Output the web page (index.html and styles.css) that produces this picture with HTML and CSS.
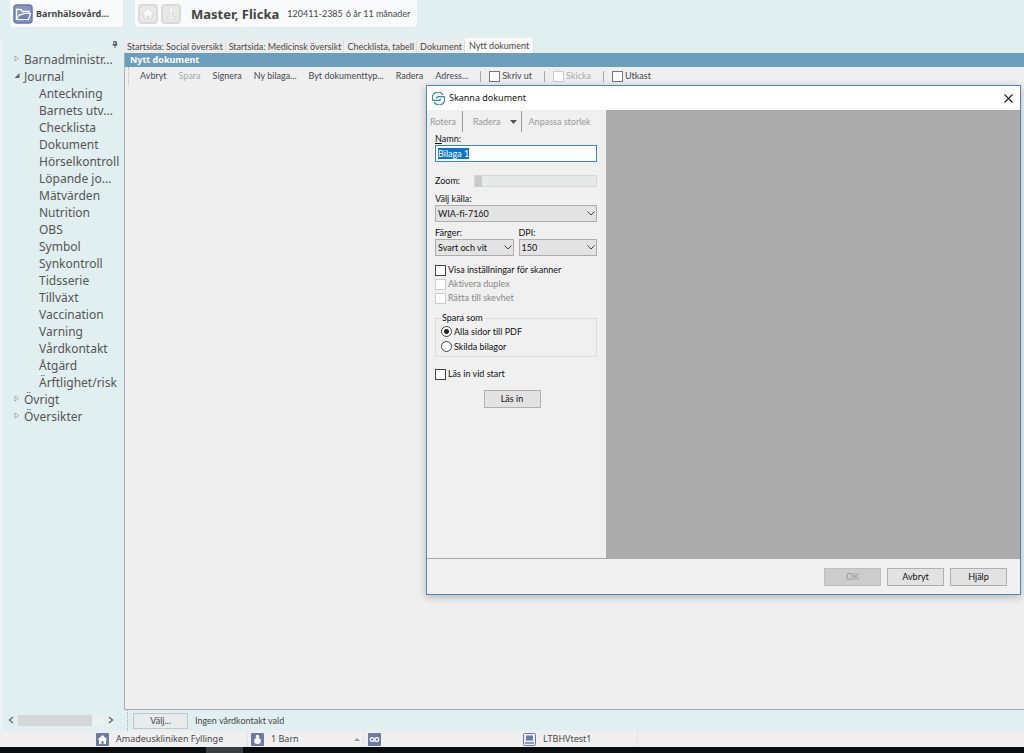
FILE: index.html
```html
<!DOCTYPE html>
<html lang="sv">
<head>
<meta charset="utf-8">
<title>Nytt dokument</title>
<link rel="stylesheet" href="styles.css">
</head>
<body>
<div class="app">
  <header class="top">
    <button class="card unit">
      <svg width="20" height="20" viewBox="0 0 20 20"><rect x="1" y="1" width="18" height="18" rx="3" fill="#8495c4" stroke="#6478ae" stroke-width="1.5"/><path d="M3.500 15V5.500h4.500l1.500 2h6.500v2" fill="none" stroke="#fff" stroke-width="1.300"/><path d="M3.500 15.500L6 11c3 0 4-1.500 6-1.500h5.500l-2 6z" fill="#7184b6" stroke="#fff" stroke-width="1.200"/></svg>
      <span>Barnhälsovård...</span>
    </button>
    <div class="card patient">
      <button class="ghost" disabled aria-label="Hem"><svg width="20" height="20" viewBox="0 0 20 20"><rect x="1" y="1" width="18" height="18" rx="3" fill="#e8e8e8" stroke="#dadada" stroke-width="2"/><path d="M10 4.500L4 10h2v5h3v-3h2v3h3v-5h2z" fill="#f8f8f8" stroke="#cfcfcf" stroke-width=".6"/></svg></button>
      <button class="ghost" disabled aria-label="Patient"><svg width="20" height="20" viewBox="0 0 20 20"><rect x="1" y="1" width="18" height="18" rx="3" fill="#e8e8e8" stroke="#dadada" stroke-width="2"/><path d="M10 4a2 2 0 0 1 1.500 3.500L11 9v4h3v2H6v-2h3V9l-.5-1.500A2 2 0 0 1 10 4z" fill="#f8f8f8" stroke="#cfcfcf" stroke-width=".6"/></svg></button>
      <h1>Master, Flicka</h1>
      <span class="pid">120411-2385</span>
      <span>6 år 11 månader</span>
    </div>
  </header>

  <div class="middle">
    <aside class="side">
      <button class="pin" aria-label="Fäst"><svg width="6" height="7" viewBox="0 0 7 8"><path d="M2 .5h3v4H2zM.5 4.500h6M3.500 4.500V8M4.500 1v3" fill="none" stroke="#444"/></svg></button>
      <nav class="tree">
        <a href="#" class="root"><svg width="6" height="8" viewBox="0 0 6 8"><path d="M1 0l3.500 2.500L1 5z" fill="#fff" stroke="#8a9494" stroke-width=".8"/></svg>Barnadministr...</a>
        <a href="#" class="root"><svg width="6" height="8" viewBox="0 0 6 8"><path d="M5.500 0v5H.5z" fill="#666"/></svg>Journal</a>
        <a href="#">Anteckning</a>
        <a href="#">Barnets utv...</a>
        <a href="#">Checklista</a>
        <a href="#">Dokument</a>
        <a href="#">Hörselkontroll</a>
        <a href="#">Löpande jo...</a>
        <a href="#">Mätvärden</a>
        <a href="#">Nutrition</a>
        <a href="#">OBS</a>
        <a href="#">Symbol</a>
        <a href="#">Synkontroll</a>
        <a href="#">Tidsserie</a>
        <a href="#">Tillväxt</a>
        <a href="#">Vaccination</a>
        <a href="#">Varning</a>
        <a href="#">Vårdkontakt</a>
        <a href="#">Åtgärd</a>
        <a href="#">Ärftlighet/risk</a>
        <a href="#" class="root"><svg width="6" height="8" viewBox="0 0 6 8"><path d="M1 0l3.500 2.500L1 5z" fill="#fff" stroke="#8a9494" stroke-width=".8"/></svg>Övrigt</a>
        <a href="#" class="root"><svg width="6" height="8" viewBox="0 0 6 8"><path d="M1 0l3.500 2.500L1 5z" fill="#fff" stroke="#8a9494" stroke-width=".8"/></svg>Översikter</a>
      </nav>
      <div class="scroll">
        <button aria-label="Vänster"><svg width="6" height="8" viewBox="0 0 6 8"><path d="M5 1L1.500 4 5 7" fill="none" stroke="#666" stroke-width="1.300"/></svg></button>
        <div class="track"><div class="thumb"></div></div>
        <button aria-label="Höger"><svg width="6" height="8" viewBox="0 0 6 8"><path d="M1 1l3.500 3L1 7" fill="none" stroke="#666" stroke-width="1.300"/></svg></button>
      </div>
    </aside>

    <main class="main">
      <div class="tabs">
        <button>Startsida: Social översikt</button>
        <button>Startsida: Medicinsk översikt</button>
        <button>Checklista, tabell</button>
        <button>Dokument</button>
        <button class="active">Nytt dokument</button>
      </div>
      <section class="doc">
        <h2>Nytt dokument</h2>
        <div class="toolbar">
          <button>Avbryt</button>
          <button disabled>Spara</button>
          <button>Signera</button>
          <button>Ny bilaga...</button>
          <button>Byt dokumenttyp...</button>
          <button>Radera</button>
          <button>Adress...</button>
          <label class="tick"><input type="checkbox">Skriv ut</label>
          <label class="tick off"><input type="checkbox" disabled>Skicka</label>
          <label class="tick last"><input type="checkbox">Utkast</label>
        </div>
      </section>
      <div class="contact">
        <button class="btn">Välj...</button>
        <span>Ingen vårdkontakt vald</span>
      </div>
    </main>
  </div>

  <footer class="status">
    <div class="cell clinic"><svg width="13" height="13" viewBox="0 0 13 13"><rect width="13" height="13" rx="1" fill="#6d7ba3"/><path d="M6.500 2L1.500 6.500H3V11h2.500V8h2v3H10V6.500h1.500z" fill="#fff"/></svg>Amadeuskliniken Fyllinge</div>
    <div class="cell child"><svg width="13" height="13" viewBox="0 0 13 13"><rect width="13" height="13" rx="1" fill="#6d7ba3"/><circle cx="6.500" cy="3.500" r="1.800" fill="#fff"/><ellipse cx="6.500" cy="8" rx="3.500" ry="3" fill="#fff"/></svg>1 Barn<svg class="up" width="6" height="4" viewBox="0 0 6 4"><path d="M0 4l3-3 3 3z" fill="#999"/></svg></div>
    <div class="cell link"><svg width="13" height="13" viewBox="0 0 13 13"><rect width="13" height="13" rx="1" fill="#6d7ba3"/><circle cx="4.200" cy="6.500" r="1.900" fill="none" stroke="#fff" stroke-width="1.300"/><circle cx="8.800" cy="6.500" r="1.900" fill="none" stroke="#fff" stroke-width="1.300"/></svg></div>
    <div class="cell host"><svg width="13" height="13" viewBox="0 0 13 13"><rect x=".5" y=".5" width="12" height="12" rx="1" fill="#e9edf7" stroke="#6d7ba3"/><rect x="3" y="2.500" width="7" height="5" fill="#6d7ba3"/><path d="M2 10h9" stroke="#6d7ba3" stroke-width="1.500"/></svg>LTBHVtest1</div>
  </footer>
  <div class="taskbar"><i></i></div>
</div>

<div class="dialog" role="dialog" aria-labelledby="dlg-title">
  <div class="dlg-head">
    <svg width="13" height="13" viewBox="0 0 13 13"><path d="M10.800 2.900A5.600 5.600 0 0 0 1 8.400h5.500a2 2 0 0 0 2-2M2.200 10.100A5.600 5.600 0 0 0 12 4.600H6.500a2 2 0 0 0-2 2" fill="none" stroke="#2d8fa0" stroke-width="1.300"/></svg>
    <span id="dlg-title">Skanna dokument</span>
    <button aria-label="Stäng"><svg width="9" height="9" viewBox="0 0 9 9"><path d="M.5.5l8 8M8.500.5l-8 8" stroke="#222" stroke-width="1.100"/></svg></button>
  </div>
  <div class="dlg-body">
    <div class="panel">
      <div class="tools">
        <button disabled>Rotera</button>
        <button disabled class="split">Radera<svg width="7" height="4" viewBox="0 0 7 4"><path d="M0 0h7L3.500 4z" fill="#555"/></svg></button>
        <button disabled>Anpassa storlek</button>
      </div>
      <form class="form">
        <label for="name"><span><u>N</u>amn:</span></label>
        <input id="name" class="text" type="text" value="Bilaga 1">
        <div class="zoom"><label for="zoom">Zoom:</label><input id="zoom" type="range" value="0" disabled></div>
        <label for="source">Välj källa:</label>
        <div class="pick"><select id="source"><option>WIA-fi-7160</option></select><svg width="8" height="5" viewBox="0 0 8 5"><path d="M.5.5L4 4 7.500.5" fill="none" stroke="#444"/></svg></div>
        <div class="pair">
          <div><label for="color">Färger:</label><div class="pick"><select id="color"><option>Svart och vit</option></select><svg width="8" height="5" viewBox="0 0 8 5"><path d="M.5.5L4 4 7.500.5" fill="none" stroke="#444"/></svg></div></div>
          <div><label for="dpi">DPI:</label><div class="pick"><select id="dpi"><option>150</option></select><svg width="8" height="5" viewBox="0 0 8 5"><path d="M.5.5L4 4 7.500.5" fill="none" stroke="#444"/></svg></div></div>
        </div>
        <div class="checks">
          <label><input type="checkbox">Visa inställningar för skanner</label>
          <label class="off"><input type="checkbox" disabled>Aktivera duplex</label>
          <label class="off"><input type="checkbox" disabled>Rätta till skevhet</label>
        </div>
        <fieldset>
          <legend>Spara som</legend>
          <label><input type="radio" name="save" checked>Alla sidor till PDF</label>
          <label><input type="radio" name="save">Skilda bilagor</label>
        </fieldset>
        <label><input type="checkbox">Läs in vid start</label>
        <button type="button" class="btn read">Läs in</button>
      </form>
    </div>
    <div class="preview"></div>
  </div>
  <div class="dlg-foot">
    <button class="btn" disabled>OK</button>
    <button class="btn">Avbryt</button>
    <button class="btn">Hjälp</button>
  </div>
</div>
<script src="app.js"></script>
</body>
</html>
```
FILE: app.js
```js
const nameField = document.getElementById("name");
nameField.focus();
nameField.select();
```
FILE: styles.css
```css
* { box-sizing: border-box; }
body {
  margin: 0;
  font: 9px/14px Lato, "Noto Sans", sans-serif;
  font-variant-ligatures: none;
  color: #484848;
}
button, input, select { font: inherit; color: inherit; }
button { border: 0; padding: 0; background: none; white-space: nowrap; }
label, span, a, h1 { white-space: nowrap; }
svg { flex: none; }
.app { display: flex; flex-direction: column; min-height: 100vh; background: #e1eff0; }

.top { display: flex; gap: 12px; padding-left: 10px; height: 38px; align-items: flex-start; }
.card { display: flex; align-items: center; height: 27px; background: #f9fafb; border-radius: 0 0 4px 4px; }
.unit { width: 113px; gap: 3px; padding-left: 3px; font-family: "Noto Sans", sans-serif; font-weight: bold; color: #444; }
.patient { gap: 3px; padding: 0 7px 0 3px; }
.ghost { display: flex; }
.patient h1 { margin: 0 5px 0 7px; font-family: "Noto Sans", sans-serif; font-size: 13px; line-height: 18px; color: #444; }

.middle { flex: 1; display: flex; }
.side { width: 124px; flex: none; display: flex; flex-direction: column; border-left: 2px solid #edf3f4; }
.pin { align-self: flex-end; height: 12px; margin-right: 6px; line-height: 0; }
.tree { flex: 1; display: flex; flex-direction: column; padding-top: 1px; font-family: "Noto Sans", sans-serif; }
.tree a { font-size: 12px; line-height: 17px; color: #555; text-decoration: none; padding-left: 37px; }
.tree .root { display: flex; align-items: center; gap: 4px; padding-left: 12px; }
.scroll { display: flex; align-items: center; height: 22px; padding: 0 10px 0 6px; gap: 4px; }
.track { flex: 1; background: #edf0f0; }
.scroll button { display: flex; }
.thumb { height: 11px; width: 86%; background: #d5d6d7; }

.main { flex: 1; min-width: 0; display: flex; flex-direction: column; }
.tabs { display: flex; align-items: flex-end; height: 15px; }
.tabs button { height: 13px; padding: 0 2px 0 3px; background: #ececed; border-right: 1px solid #dcdfe0; }
.tabs .active { height: 15px; padding: 0 4px; background: #fafafa; }
.doc { flex: 1; background: #efeff0; border: 1px solid #a5b0b5; border-width: 0 0 1px 1px; }
.doc h2 { margin: 0; padding-left: 5px; font-family: "Noto Sans", sans-serif; font-size: 9px; line-height: 14px; color: #fff; background: #6c9ebc; }
.toolbar { display: flex; align-items: center; gap: 12px; height: 18px; margin-left: 3px; padding-left: 11px; border-left: 1px dotted #bbb; }
.toolbar button:disabled, .off { color: #aaa; }
.tick { height: 11px; padding-left: 8px; border-left: 1px solid #aaa; }
label { display: flex; align-items: center; gap: 2px; }
.contact { display: flex; align-items: center; gap: 7px; height: 21px; margin-left: 3px; padding-left: 5px; border-left: 1px dotted #aaa; }
.btn { width: 57px; height: 18px; background: #e2e2e2; border: 1px solid #b0b0b0; }
.contact .btn { width: 55px; height: 16px; background: #e7ebec; border-color: #c4c8c9; }

.status { display: flex; height: 16px; background: #efefef; padding-left: 96px; font-family: "Noto Sans", sans-serif; }
.cell { display: flex; align-items: center; gap: 7px; border-right: 1px solid #e3e3e3; }
.clinic { width: 152px; }
.child { width: 116px; padding-left: 3px; }
.child .up { margin-left: auto; margin-right: 3px; }
.link { width: 156px; padding-left: 4px; border: 0; }
.host { width: 118px; padding-left: 3px; }
.taskbar { height: 6px; background: #0b0c10; padding-left: 206px; }
.taskbar i { display: block; width: 37px; height: 6px; background: #3b3c3f; }

input[type="checkbox"], input[type="radio"] {
  appearance: none; width: 11px; height: 11px; margin: 0; flex: none;
  background: #fff; border: 1px solid #444;
}
.tick input[type="checkbox"] { border-color: #777; }
input[type="checkbox"]:disabled, .tick input[type="checkbox"]:disabled { border-color: #ccc; }
input[type="radio"] { border-radius: 50%; }
input[type="radio"]:checked { background: radial-gradient(circle, #222 0 2px, #fff 3px); }

.dialog {
  position: absolute; top: 85px; right: 3px; width: 595px; height: 510px;
  display: flex; flex-direction: column; color: #111;
  background: #f0f0f0; border: 1px solid #4d8ab9;
  box-shadow: 0 2px 8px rgba(0, 0, 0, .25);
}
.dlg-head { display: flex; align-items: center; gap: 4px; height: 24px; padding: 0 7px 0 5px; background: #fff; font-family: "Noto Sans", sans-serif; }
.dlg-head button { margin-left: auto; display: flex; }
.dlg-body { flex: 1; display: flex; border-bottom: 1px solid #aaa; }
.panel { width: 179px; }
.preview { flex: 1; background: #ababab; }
.tools { display: flex; align-items: center; height: 23px; color: #999; }
.tools button { height: 21px; padding: 0 7px; border-left: 1px solid #999; }
.tools button:first-child { padding: 0 6px 0 3px; border: 0; }
.tools .split { display: flex; align-items: center; gap: 9px; padding: 0 4px 0 10px; }
.form { display: flex; flex-direction: column; padding: 0 9px 0 8px; line-height: 12px; }
.text { height: 17px; padding: 0 2px; background: #fff; border: 1px solid #3a87c8; outline: 0; }
.text::selection { background: #0a74d1; color: #fff; }
.zoom { display: flex; align-items: center; justify-content: space-between; margin: 13px 0 6px; }
.zoom input { appearance: none; width: 123px; height: 12px; margin: 0; background: #e7e8e8; border: 1px solid #d6d7d7; }
.zoom input::-webkit-slider-thumb { appearance: none; width: 7px; height: 11px; background: #cacaca; }
.pick { position: relative; display: flex; }
.pick select { appearance: none; flex: 1; min-width: 0; height: 17px; padding: 0 2px; background: #e3e3e3; border: 1px solid #adadad; border-radius: 0; }
.pick svg { position: absolute; right: 2px; top: 6px; pointer-events: none; }
.pair { display: grid; grid-template-columns: 1fr 1fr; gap: 5px; margin-top: 5px; }
.checks { margin-top: 7px; line-height: 14px; }
.dialog .off { color: #888; }
fieldset { margin: 7px 0 11px; padding: 0 6px 2px 5px; border: 1px solid #dcdcdc; line-height: 15px; }
legend { padding: 0 1px; line-height: 12px; }
.read { align-self: center; margin-top: 10px; margin-right: 8px; }
.dlg-foot { display: flex; align-items: center; justify-content: flex-end; gap: 6px; height: 35px; padding-right: 13px; }
.dlg-foot .btn:disabled { background: #ccc; border-color: #bfbfbf; color: #999; }
```
